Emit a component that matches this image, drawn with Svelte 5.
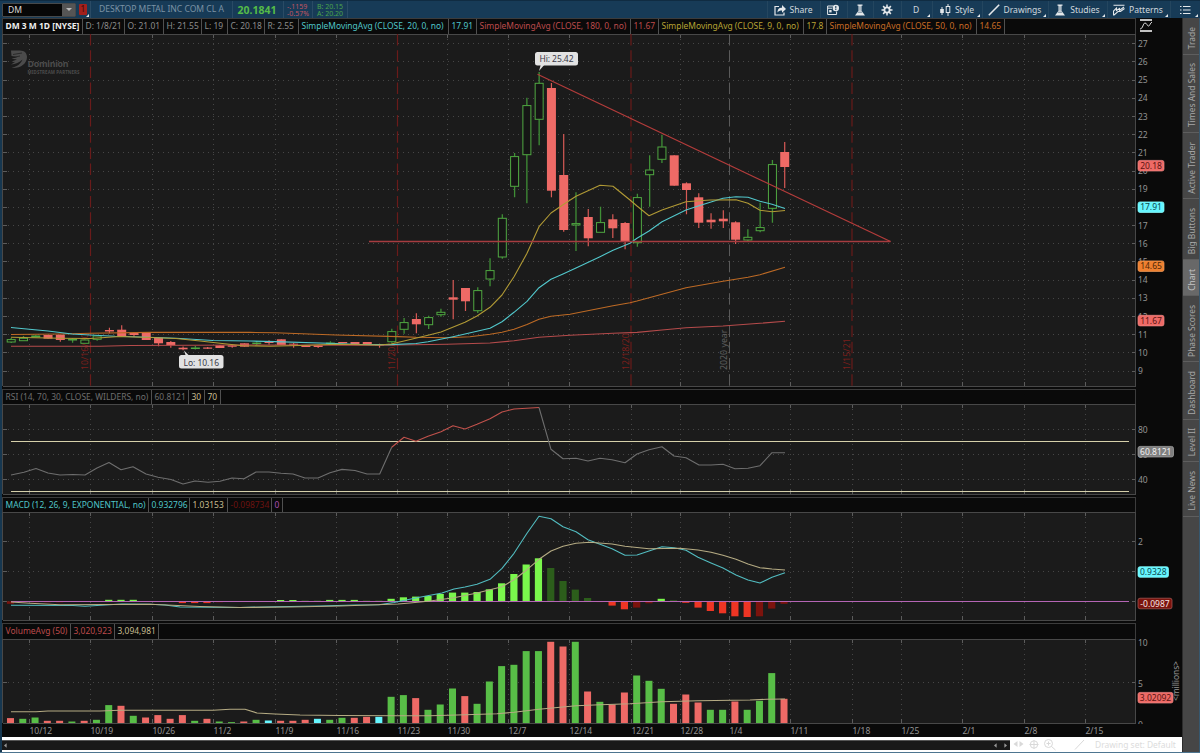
<script>
  const buttons = [
    { icon: 'share', label: 'Share', w: 53 },
    { icon: 'calendar', w: 27 },
    { icon: 'flask', w: 26 },
    { icon: 'gear', w: 28 },
    { label: 'D', w: 31, menu: true },
    { icon: 'candles', label: 'Style', w: 50, menu: true },
    { icon: 'line', label: 'Drawings', w: 66, menu: true },
    { icon: 'flask', label: 'Studies', w: 59, menu: true },
    { icon: 'patterns', label: 'Patterns', w: 63, menu: true },
    { icon: 'list', w: 30, menu: true }
  ];

  const tabs = [
    { name: 'Trade', h: 37 },
    { name: 'Times And Sales', h: 78 },
    { name: 'Active Trader', h: 66 },
    { name: 'Big Buttons', h: 61 },
    { name: 'Chart', h: 36, active: true },
    { name: 'Phase Scores', h: 66 },
    { name: 'Dashboard', h: 58 },
    { name: 'Level II', h: 42 },
    { name: 'Live News', h: 55 }
  ];

  const priceCells = [
    { t: 'DM 3 M 1D [NYSE]', w: 80, c: 'title' },
    { t: 'D: 1/8/21', w: 42 },
    { t: 'O: 21.01', w: 39 },
    { t: 'H: 21.55', w: 38 },
    { t: 'L: 19', w: 26 },
    { t: 'C: 20.18', w: 37 },
    { t: 'R: 2.55', w: 34 },
    { t: 'SimpleMovingAvg (CLOSE, 20, 0, no)', w: 150, c: 'cyan' },
    { t: '17.91', w: 28, c: 'cyan' },
    { t: 'SimpleMovingAvg (CLOSE, 180, 0, no)', w: 154, c: 'red' },
    { t: '11.67', w: 28, c: 'red' },
    { t: 'SimpleMovingAvg (CLOSE, 9, 0, no)', w: 145, c: 'yellow' },
    { t: '17.8', w: 23, c: 'yellow' },
    { t: 'SimpleMovingAvg (CLOSE, 50, 0, no)', w: 150, c: 'orange' },
    { t: '14.65', w: 28, c: 'orange' }
  ];
  const rsiCells = [
    { t: 'RSI (14, 70, 30, CLOSE, WILDERS, no)', w: 149, c: 'dim' },
    { t: '60.8121', w: 37, c: 'dim' },
    { t: '30', w: 16, c: 'khaki' },
    { t: '70', w: 16, c: 'khaki' }
  ];
  const macdCells = [
    { t: 'MACD (12, 26, 9, EXPONENTIAL, no)', w: 146, c: 'cyan' },
    { t: '0.932796', w: 41, c: 'cyan' },
    { t: '1.03153', w: 38, c: 'khaki' },
    { t: '-0.098734', w: 44, c: 'darkred' },
    { t: '0', w: 11, c: 'magenta' }
  ];
  const volumeCells = [
    { t: 'VolumeAvg (50)', w: 68, c: 'red' },
    { t: '3,020,923', w: 44, c: 'red' },
    { t: '3,094,981', w: 44, c: 'khaki' }
  ];

  const dates = [
    ['10/12', 29.5], ['10/19', 90.5], ['10/26', 152.5], ['11/2', 213.5], ['11/9', 275.5],
    ['11/16', 336.5], ['11/23', 397.5], ['11/30', 447.5], ['12/7', 508.5], ['12/14', 569.5],
    ['12/21', 631.5], ['12/28', 680.5], ['1/4', 729.5], ['1/11', 790.5], ['1/18', 852.5],
    ['1/25', 901.5], ['2/1', 962.5], ['2/8', 1024.5], ['2/15', 1085.5]
  ];
  const expirations = [
    { x: 90.5, t: '10/16/20' },
    { x: 397.5, t: '11/20/20' },
    { x: 631, t: '12/18/20' },
    { x: 852, t: '1/15/21' }
  ];
  const marked = [90.5, 397.5, 631.5, 729.5, 852.5];

  const x = (i) => 11.2 + i * 12.278;
  const py = (p) => 43.3 + (27 - p) * 18.18;
  const prices = Array.from({ length: 19 }, (_, i) => 27 - i);

  // up, body top, body bottom, high, low
  const candles = [
    [1, 339.3, 342, 338, 343], [1, 338, 340.7, 336, 340.7], [1, 335.7, 337, 335, 337],
    [0, 335, 338.7, 335, 338.7], [0, 334.7, 340, 334.7, 341.7], [1, 339, 340, 338, 342.7],
    [1, 339.7, 343.3, 339, 343.3], [1, 335.7, 339.3, 335, 340.7], [0, 330, 331.5, 327.7, 333.3],
    [0, 329.7, 336.7, 325.3, 336.7], [0, 333, 335, 333, 337], [0, 333, 340, 333, 340],
    [0, 337.7, 343.3, 337.7, 346.3], [0, 342, 345.3, 341, 347.7], [0, 347.7, 349.3, 346.5, 350.3],
    [1, 347.7, 348.4, 346, 349.5], [0, 347.5, 348.7, 347, 349], [0, 345.3, 348, 345, 348],
    [0, 345.3, 346.7, 345, 347.7], [0, 343.3, 346.7, 343.3, 346.7], [1, 342.8, 343.5, 341, 345],
    [0, 341.7, 343, 340.3, 344.7], [0, 339.3, 345, 339.3, 345], [0, 343.7, 344.7, 343, 347.7],
    [0, 345.3, 347, 345, 347], [0, 345.3, 347, 345, 348], [1, 342.8, 343.5, 341.3, 344],
    [0, 342, 343.3, 342, 343.3], [0, 342, 344, 342, 344], [0, 342, 344.3, 342, 345],
    [0, 344.5, 345.4, 343.7, 347.7], [1, 331.3, 341.7, 328.7, 342.7], [1, 322.3, 329.3, 318, 333.7],
    [0, 319, 324.3, 313.3, 333.3], [1, 317.3, 324.7, 315.7, 329], [1, 312, 314.7, 308.7, 316.7],
    [0, 297.3, 299.7, 280, 319.3], [0, 288, 301.3, 288, 311], [1, 290.3, 310.7, 287.3, 313],
    [1, 270.3, 279, 258.3, 286.3], [1, 218, 257, 214.3, 258.7], [1, 156.3, 186.3, 153, 197.3],
    [1, 105.3, 154.7, 97.7, 203.3], [1, 83, 119.3, 72, 145.3], [0, 88, 190.7, 83, 197.3],
    [0, 175, 230, 134, 231.7], [1, 223.3, 225, 192.3, 251], [0, 217, 238.3, 209, 246.3],
    [1, 222.3, 232.3, 206.7, 232.3], [0, 219.3, 228.3, 214.3, 238], [0, 223, 241.3, 222, 249.3],
    [1, 197.3, 242.7, 193.7, 246.7], [1, 169.7, 174.7, 155.3, 206.7], [1, 146.7, 159.3, 134.7, 163],
    [0, 155.3, 185.7, 155.3, 185.7], [0, 183.3, 190, 182.3, 214.3], [0, 197.3, 222.7, 193.3, 228],
    [0, 219.7, 222.3, 213.3, 228.7], [0, 218.7, 221.3, 210.3, 228], [0, 222.3, 239.7, 221.3, 244],
    [1, 237, 240, 229.3, 241], [1, 227.3, 230.7, 202.7, 232.3], [1, 164.3, 208.3, 160, 222.7],
    [0, 152, 167, 142, 188]
  ];

  const sma20 = '11,327.5 24,328.8 48,331 72,334 90,335 115,336.3 140,337 176,338.3 213,340.5 250,341 275,341.6 336,343.5 360,344.5 391,344.6 416,343.5 428,341.8 453,336.7 490,328.3 502,321.7 514,312.3 527,301.3 539,287.7 551,279.3 563,274 576,268 600,256.7 613,250.3 630,243.3 637,238.3 649,231 662,221.7 686,210 699,205.7 723,198.3 736,196.7 748,197.3 760,201.3 772,204.3 785,208.5';
  const sma9 = '11,337.3 60,338.3 90,338.5 120,336.5 150,337.5 176,338.5 200,341 220,343.3 243,345.7 270,346.2 300,345.5 336,344.3 379,345 391,344 404,341 428,335.3 441,332 465,322.3 477,316 490,307.3 502,295 514,276.7 527,253.3 539,226.7 551,213 563,204.7 576,196.3 600,185.3 613,186.3 630,200 637,206 649,215.7 662,210 686,201.7 710,200 736,199.7 748,203.3 760,210.3 772,211.7 785,210.5';
  const sma50 = '11,334.5 60,334 90,333.3 150,332.4 250,332.4 275,332.8 336,335 398,336.6 416,337.3 447,337.7 470,336.7 490,334.3 502,332.3 514,329.3 527,324.5 539,319.3 551,316.3 570,314.2 613,305.7 630,302.7 637,301 662,294.3 686,287.7 723,281.3 748,277.3 760,274.7 785,267.3';
  const sma180 = '11,346.3 100,346.3 130,345.5 250,345 380,345.2 447,344.3 490,343 514,340.7 539,337.3 570,335.3 613,333.3 637,332.4 662,330 686,327.7 723,326 760,323.3 785,321.3';

  const rsiA = '11,475 24,472.3 36,468.5 48,473 60,475 73,474.5 85,475 97,468 109,462.5 121,469.7 133,466.7 146,474 158,477.3 171,479.5 183,484 195,481 208,482.3 220,481.3 232,478 244,478.7 256,472 269,472 281,473.3 293,474 305,478 318,478 330,472.7 342,469.4 355,470.5 367,474 379.7,474 391.7,447.3';
  const rsiHot = '391.7,447.3 404,437.3 416,441.2 428,436.3 441,431.7 453,425.7 465,429 477,424.3 490,418.7 502,412 514,409 539,407.5';
  const rsiB = '539,407.5 551,449.3 563,458.7 576,458.3 588,461 600,458.3 612,459.7 625,462.7 637,454 649,449.7 662,446.7 674,456 686,457.7 699,465 711,465 723,464.3 735,468.7 748,468.2 760,465.7 772,452.7 785,452.7';

  const macd = '11,605.3 73,605.5 85,606.3 97,605.5 122,604 150,604.3 165,605 180,607 240,607.5 275,606.7 320,606 355,605 379,604.7 394,602.5 417,597.7 442,593 454,589 465,587 477,584.3 490,579.3 502,568.3 514,553.3 527,533.3 539,516.3 551,518.7 563,526.7 576,531.7 588,539.7 612,548.7 625,555.3 637,555 649,551 662,546.7 674,547.7 686,550.3 698,557.3 711,563 723,568 736,575 748,580 760,583 772,577.3 785,572.7';
  const signal = '11,602 30,603.3 60,604.7 150,604.3 200,606.5 240,607.5 290,607 340,606 398,604 410,603 430,601 454,597.7 477,593 502,586.7 514,579.7 527,569.7 539,559.3 551,551 563,546.3 576,543.3 590,542.3 612,544 625,546.3 649,548.7 680,548.3 698,550 711,552.3 723,555.3 736,559.3 748,564 760,567.7 772,569 785,570';

  // histogram bars: height above zero, growing or fading
  const hist = [
    [-2.5, 0], [-1, 0], [-1, 0], [-1, 0], [-1, 0], [-0.6, 0], [-0.6, 0], [0.3, 0],
    [1.5, 1], [1.5, 1], [1.5, 1], [0, 0], [0, 0], [-0.6, 1], [-1.8, 1], [-1.8, 1],
    [-1.8, 1], [-1, 0], [-0.6, 0], [-0.6, 0], [0, 0], [0, 0], [1.3, 1], [1.3, 1],
    [0.8, 0], [0.8, 0], [1.4, 1], [1.4, 1], [1.4, 1], [0.8, 0], [0.8, 0], [2.5, 1],
    [4, 1], [4.7, 1], [5.3, 1], [7.3, 1], [8.7, 1], [8.7, 1], [9.3, 1], [12, 1],
    [18, 1], [27.3, 1], [36.8, 1], [43, 1], [33.3, 0], [20.3, 0], [11.7, 0], [3.3, 0],
    [-0.8, 0], [-4.3, 1], [-8, 1], [-6.3, 0], [-2, 0], [2.5, 1], [1, 0], [-1.5, 1],
    [-6.3, 1], [-9.7, 1], [-12, 1], [-15, 1], [-15.7, 1], [-15, 0], [-7.3, 0], [-2.5, 0]
  ];
  const histColor = ([h, strong]) =>
    h > 0 ? (strong ? '#7af74c' : '#2c5e1b') : strong ? '#ee3524' : '#7c130d';

  // volume bars: colour key, bar top
  const volume = [
    ['r', 718.3], ['g', 719], ['g', 717.7], ['r', 721], ['r', 721], ['g', 721.7], ['r', 721], ['g', 720],
    ['g', 705.3], ['r', 706], ['g', 716], ['r', 717.7], ['r', 715.3], ['r', 719], ['r', 715.3], ['g', 721],
    ['r', 719], ['g', 721.7], ['g', 722.3], ['r', 721.7], ['g', 720], ['c', 720.7], ['r', 721], ['r', 721],
    ['r', 720], ['c', 719], ['g', 720], ['g', 718], ['r', 718], ['r', 717], ['c', 717], ['g', 697],
    ['g', 695.3], ['r', 698.3], ['g', 710], ['g', 704.7], ['g', 688.7], ['r', 696.3], ['g', 704], ['g', 681.7],
    ['g', 666.3], ['g', 665], ['g', 651.3], ['g', 651.3], ['r', 642], ['r', 646.7], ['g', 642], ['r', 691.7],
    ['g', 702], ['r', 704.7], ['r', 692.7], ['g', 675.7], ['g', 681], ['g', 689], ['r', 704], ['r', 694.7],
    ['r', 702.7], ['g', 710], ['g', 710], ['r', 701.7], ['g', 710], ['g', 701], ['g', 673.3], ['r', 699]
  ];
  const volColor = { r: '#ee6a66', g: '#58be47', c: '#66f6ff' };
  const volAvg = '11,711.7 36,711.7 48,711 100,711 120,710.2 213,710.2 230,709.2 245,709.3 257,713 275,714 300,715 340,715.5 398,715.7 430,715.7 457,715 497,713.7 514,712.3 539,709.3 576,705.7 600,704.8 630,703.7 662,701.7 698,700.7 750,700 767,699.3 785,699';
</script>

{#snippet icon(name)}
  <svg class="icon" viewBox="0 0 12 12">
    {#if name === 'share'}
      <path d="M5 2.5H1v8.500h9V8.500" fill="none" stroke="#e4e8eb" stroke-width="1.2" />
      <path d="M3.500 8.500C3.600 5 5 3.800 8 3.800V1l4 4-4 3.700V6.400C6 6.400 4.600 6.800 3.500 8.500z" />
    {:else if name === 'calendar'}
      <path d="M6 2H.6v8.500h9V7.500M.6 4.200H5" fill="none" stroke="#e4e8eb" stroke-width="1" />
      <rect x="2.200" y="6" width="2.400" height="2.400" />
      <circle cx="8.800" cy="4" r="3.200" />
      <path d="M8.800 2v2.500M8.800 5v1" stroke="#173b57" stroke-width="1.100" />
    {:else if name === 'flask'}
      <path d="M3.500.5h5v1.200h-5zM4.500 1.700h3v5l3.500 4.800H1l3.500-4.800z" />
      <path d="M6 2.200v4.500M3.800 8.200h4.400" stroke="#506c82" stroke-width=".8" />
    {:else if name === 'gear'}
      <path d="M6 .5v11M.5 6h11M2.100 2.100l7.800 7.800M9.900 2.100L2.100 9.900" stroke="#e4e8eb" stroke-width="1.500" />
      <circle cx="6" cy="6" r="3.500" />
      <circle cx="6" cy="6" r="1.700" fill="#173b57" />
    {:else if name === 'candles'}
      <path d="M3 3v8M9 0v12" stroke="#e4e8eb" stroke-width="1" />
      <rect x="1.200" y="5" width="3.600" height="4" />
      <rect x="7.200" y="2.500" width="3.600" height="6" fill="#173b57" stroke="#e4e8eb" stroke-width="1" />
    {:else if name === 'line'}
      <path d="M.8 11.200L11.200.8" stroke="#e4e8eb" stroke-width="1.600" />
    {:else if name === 'patterns'}
      <path d="M.5 1.300h11M.5 11.500V7l3-3v2.500l3-2v2l4.500-3.500M1 11l4-3.500h2.500l4-3" fill="none" stroke="#e4e8eb" stroke-width="1.100" />
    {:else if name === 'list'}
      <path d="M1 2.500h1.500M4 2.500h7.500M1 6h1.500M4 6h7.500M1 9.500h1.500M4 9.500h7.500" stroke="#e4e8eb" stroke-width="1.100" />
    {/if}
  </svg>
{/snippet}

{#snippet header(cells)}
  <div class="cells">
    {#each cells as cell}
      <span class="cell {cell.c ?? ''}" style:width="{cell.w}px">{cell.t}</span>
    {/each}
  </div>
{/snippet}

{#snippet grid(top, bottom, rows)}
  <rect x="2" y={top} width="1134" height={bottom - top} fill="#1b1b1b" />
  <g shape-rendering="crispEdges">
    {#each rows as r}
      <line x1="3" x2="1130" y1={Math.round(r) + 0.5} y2={Math.round(r) + 0.5} class="dots" />
      <path d="M3 {Math.round(r) + 0.5}h4M1132 {Math.round(r) + 0.5}h4" class="tick" />
    {/each}
    {#each dates as [, gx]}
      {#if bottom - top < 200 || !marked.includes(gx)}
        <line x1={gx} x2={gx} y1={top} y2={bottom} class="dots" />
        <path d="M{gx} {top}v4M{gx} {bottom}v-4" class="tick" />
      {/if}
    {/each}
    <path d="M2.500 {bottom}V{top + 0.5}H1135.500V{bottom}H2.500" class="frame" />
  </g>
{/snippet}

{#snippet tag(tx, ty, w, text, bg, fg, edge)}
  <rect x={tx} y={ty - 5.300} width={w} height="10.600" rx="2" fill={bg} stroke={edge} stroke-width=".7" />
  <text x={tx + w / 2} y={ty + 3.100} text-anchor="middle" fill={fg}>{text}</text>
{/snippet}

<div class="app">
  <header class="toolbar">
    <div class="symbol"><span>DM</span><i></i></div>
    <div class="badge">1</div>
    <div class="company">DESKTOP METAL INC COM CL A</div>
    <div class="last">20.1841</div>
    <div class="pair down"><span>-.1159</span><span>-0.57%</span></div>
    <div class="pair up"><span>B: 20.15</span><span>A: 20.20</span></div>
    <div class="spacer"></div>
    {#each buttons as b}
      <button style:width="{b.w}px" class:menu={b.menu}>
        {#if b.icon}{@render icon(b.icon)}{/if}
        {#if b.label}<span>{b.label}</span>{/if}
      </button>
    {/each}
  </header>

  <div class="body">
    <main>
      <section class="price">
        <div class="head">
          {@render header(priceCells)}
          <svg class="fit" viewBox="0 0 12 13">
            <path d="M0 1h12M0 12h12" stroke="#fff" stroke-width="1.500" />
            <path d="M0 10C3 10 3 4 5 4s2 3 3.500 3S10 4 12 3" fill="none" stroke="#ddd" />
          </svg>
        </div>
        <svg class="plot" viewBox="2 34 1180 354" height="354">
          {@render grid(34, 386, prices.map(py))}
          {#each expirations as e}
            <line x1={e.x} x2={e.x} y1="34" y2="386" stroke="#6a1b1a" stroke-width="1.200" stroke-dasharray="11.500 4.700" />
            <text transform="translate({e.x - 2.500} 370) rotate(-90)" fill="#7c1f1c" class="mark">{e.t}</text>
          {/each}
          <line x1="729.500" x2="729.500" y1="34" y2="386" stroke="#5a5a5a" stroke-dasharray="11.500 4.700" />
          <text transform="translate(727 370) rotate(-90)" fill="#606060" class="mark">2020 year</text>

          <g class="logo">
            <path d="M11 50.500h9c4.500 0 7 2.800 7 6.500 0 6.500-6 11.500-15.500 11 6-1.500 9.500-4.500 11-8.500-3 3-7 4.500-11.500 5l4-2.500-3.500-.5 5.500-2-5.500-.8 6-1.700-6-1z" />
            <path d="M13 54.500l9-1.500M13 57.500l7-1.500" stroke="#1b1b1b" stroke-width=".7" />
            <text x="27.500" y="67.300" class="brand" textLength="41">Dominion</text>
            <text x="27.500" y="74" class="sub" textLength="52">MIDSTREAM PARTNERS</text>
          </g>

          {#each candles as [up, top, bottom, high, low], i}
            {#if up}
              <path d="M{x(i)} {high}V{top}M{x(i)} {bottom}V{low}" stroke="#3f8f36" stroke-width="1.300" />
              <rect x={x(i) - 4} y={top + 0.3} width="8" height={Math.max(bottom - top - 0.3, 0.5)} fill="#151515" stroke="#50a842" />
            {:else}
              <line x1={x(i)} x2={x(i)} y1={high} y2={low} stroke="#d85a56" stroke-width="1.200" />
              <rect x={x(i) - 4.500} y={top} width="9" height={bottom - top} fill="#ee6a66" />
            {/if}
          {/each}

          <polyline points={sma180} stroke="#b54b4b" />
          <polyline points={sma50} stroke="#bd6a25" />
          <polyline points={sma20} stroke="#52c8cc" />
          <polyline points={sma9} stroke="#b19a35" />
          <line x1="369" x2="890.500" y1="241.500" y2="241.500" stroke="#a63c40" stroke-width="1.400" />
          <line x1="537.500" x2="890.500" y1="74.300" y2="241.500" stroke="#b43c3b" stroke-width="1.200" />

          <path d="M541 64l-2 7 6-7z" fill="#e2e2e2" />
          <rect x="535" y="52" width="43" height="13.500" rx="2.500" fill="#e2e2e2" />
          <text x="539.500" y="62" fill="#3a3a48" textLength="34">Hi: 25.42</text>
          <path d="M184 350.500l2 6h4z" fill="#e2e2e2" />
          <rect x="179" y="355" width="44.500" height="13.500" rx="2.500" fill="#e2e2e2" />
          <text x="183.500" y="365.700" fill="#3a3a48" textLength="35.500">Lo: 10.16</text>

          {#each prices as p}
            {#if p !== 18}<text x="1138" y={py(p) + 3.600} class="axis">{p}</text>{/if}
          {/each}
          {@render tag(1138, 165.700, 26, '20.18', '#ee6a66', '#5a1412', '#f08a86')}
          {@render tag(1138, 207.200, 26, '17.91', '#66f6ff', '#0c4b50', '#8ff')}
          {@render tag(1138, 266.200, 26, '14.65', '#ee8030', '#4f2706', '#f09a58')}
          {@render tag(1138, 320.600, 26, '11.67', '#ee6a66', '#5a1412', '#f08a86')}
        </svg>
      </section>

      <section class="rsi">
        <div class="head">{@render header(rsiCells)}</div>
        <svg class="plot" viewBox="2 404 1180 93" height="93">
          {@render grid(404, 494, [429, 454, 479])}
          <path d="M11 441.500H1129M11 491.500H1129" stroke="#d6d0aa" />
          <polyline points={rsiA} stroke="#6e6e6e" />
          <polyline points={rsiHot} stroke="#c2524c" />
          <polyline points={rsiB} stroke="#6e6e6e" />
          <text x="1138" y="432.700" class="axis">80</text>
          <text x="1138" y="457.700" class="axis">60</text>
          <text x="1138" y="483.200" class="axis">40</text>
          {@render tag(1138, 451.700, 35.500, '60.8121', '#808080', '#f0f0f0', '#aaa')}
        </svg>
      </section>

      <section class="macd">
        <div class="head">{@render header(macdCells)}</div>
        <svg class="plot" viewBox="2 512 1180 111" height="111">
          {@render grid(512, 620, [541, 571, 601])}
          {#each hist as h, i}
            <rect x={x(i) - 4.300} y={h[0] > 0 ? 601.300 - h[0] : 601.300} width="7.200" height={Math.abs(h[0])} fill={histColor(h)} />
          {/each}
          <line x1="11" x2="1129" y1="601.500" y2="601.500" stroke="#b565b5" />
          <polyline points={macd} stroke="#52bcc0" />
          <polyline points={signal} stroke="#b5ab83" />
          <text x="1138" y="545" class="axis">2</text>
          {@render tag(1138, 572, 30.500, '0.9328', '#66f6ff', '#0c4b50', '#8ff')}
          {@render tag(1138, 603.500, 34, '-0.0987', '#7c130d', '#f5e6e4', '#b0605c')}
        </svg>
      </section>

      <section class="volume">
        <div class="head">{@render header(volumeCells)}</div>
        <svg class="plot" viewBox="2 639 1180 98" height="98">
          {@render grid(639, 723, [682])}
          {#each volume as [c, top], i}
            <rect x={x(i) - 4.200} y={top - 0.200} width="7" height={723.200 - top} fill={volColor[c]} />
          {/each}
          <polyline points={volAvg} stroke="#b5ab83" />
          {#each dates as [d, dx]}
            <text x={dx} y="734" class="axis">{d}</text>
          {/each}
          <text x="1138" y="645.500" class="axis">10</text>
          <text x="1138" y="686.500" class="axis">5</text>
          <clipPath id="zero"><rect x="1136" y="719" width="12" height="5" /></clipPath>
          <text x="1138" y="727.500" class="axis" clip-path="url(#zero)">0</text>
          {@render tag(1138, 697.700, 35, '3.02092', '#ee6a66', '#5a1412', '#f08a86')}
          <text transform="translate(1179 701) rotate(-90)" class="axis" textLength="40">&lt;millions&gt;</text>
        </svg>
      </section>

      <footer>
        <div class="scroll">
          <svg viewBox="0 0 4 6"><path d="M3.500 0v6L0 3z" /></svg>
          <span></span>
          <svg viewBox="0 0 4 6"><path d="M3.500 0v6L0 3z" /></svg>
          <svg viewBox="0 0 4 6"><path d="M.5 0v6L4 3z" /></svg>
        </div>
        <svg class="tools" viewBox="1010 737 85 15">
          <g fill="none" stroke="#d9d9d9">
            <path d="M1017.500 741v6l-4-3zM1019.500 741v6l4-3z" fill="#d9d9d9" stroke="none" />
            <circle cx="1034" cy="744.500" r="3.700" />
            <path d="M1029.500 744.500h9M1034 740v9" />
            <circle cx="1048.500" cy="743.500" r="4" />
            <path d="M1051.500 746.500l4 3.500M1046.500 743.500h4M1048.500 741.500v4M1075 749.500l9-9.500" />
          </g>
        </svg>
        <span class="set">Drawing set: Default</span>
      </footer>
    </main>

    <nav>
      {#each tabs as t}
        <div class="tab" class:active={t.active} style:height="{t.h}px"><span>{t.name}</span></div>
      {/each}
    </nav>
  </div>
</div>

<style>
  :global(body) {
    background: #0a0a0a;
    overflow: hidden;
  }

  .app {
    width: 1200px;
    height: 753px;
    display: flex;
    flex-direction: column;
    box-sizing: border-box;
    font-family: 'Noto Sans', sans-serif;
    font-size: 8.45px;
    color: #8c8c8c;
    background: #0a0a0a;
    border-bottom: 1px solid #4d7590;
  }

  .toolbar {
    height: 18px;
    flex: none;
    display: flex;
    align-items: center;
    background: #173b57;
    border-top: 1px solid #102c42;
    box-sizing: border-box;
    font-size: 8.55px;
  }

  .symbol {
    width: 74px;
    height: 14px;
    margin-left: 2px;
    box-sizing: border-box;
    background: #070707;
    border: 1px solid #46494b;
    display: flex;
    align-items: center;
    justify-content: space-between;
    padding-left: 5px;
    color: #d8d8d8;
    border-radius: 1px;
  }

  .symbol i {
    width: 13px;
    height: 12px;
    background: #555;
    display: flex;
    align-items: center;
    justify-content: center;
  }

  .symbol i::after {
    content: '';
    border: 3px solid transparent;
    border-top: 3px solid #bbb;
    border-bottom: 0;
  }

  .badge {
    position: relative;
    width: 8px;
    height: 11px;
    margin-left: 3px;
    line-height: 11px;
    text-align: center;
    color: #3d0908;
    background: #a3201c;
    border-radius: 1px;
  }

  .badge::after {
    content: '';
    position: absolute;
    right: -2px;
    bottom: -2px;
    border-left: 3px solid transparent;
    border-bottom: 3px solid #e4e8eb;
  }

  .company {
    margin-left: 3px;
    width: 143px;
    height: 17px;
    line-height: 17px;
    box-sizing: border-box;
    padding-left: 8px;
    color: #7b92a4;
    border-left: 1px solid #2a4b65;
    border-right: 1px solid #2a4b65;
    white-space: nowrap;
  }

  .last {
    width: 51px;
    height: 17px;
    line-height: 18px;
    box-sizing: border-box;
    padding-left: 4.5px;
    color: #55bb48;
    font-weight: 700;
    font-size: 10.5px;
    border-right: 1px solid #2a4b65;
  }

  .pair {
    height: 17px;
    padding: 0 4px;
    display: flex;
    flex-direction: column;
    justify-content: center;
    font-size: 7px;
    line-height: 7px;
    border-right: 1px solid #2a4b65;
  }

  .down {
    color: #c05562;
    padding: 0 3px;
  }

  .up {
    color: #4aa34c;
  }

  .spacer {
    flex: 1;
  }

  button {
    position: relative;
    height: 17px;
    padding: 0 2px 0 0;
    box-sizing: border-box;
    display: flex;
    align-items: center;
    justify-content: center;
    gap: 4px;
    background: none;
    border: 0;
    border-left: 1px solid #24465f;
    color: #d0d8de;
    font: inherit;
  }

  button.menu::after {
    content: '';
    position: absolute;
    right: 2px;
    bottom: 1px;
    border-left: 3px solid transparent;
    border-bottom: 3px solid #e4e8eb;
  }

  .icon {
    width: 12px;
    height: 12px;
    fill: #e4e8eb;
    flex: none;
  }

  .body {
    flex: 1;
    display: flex;
    border-left: 2px solid #163750;
    min-height: 0;
  }

  main {
    width: 1180px;
    display: flex;
    flex-direction: column;
    background: #0a0a0a;
  }

  section {
    display: flex;
    flex-direction: column;
  }

  .head {
    height: 16px;
    display: flex;
  }

  .rsi .head,
  .macd .head {
    height: 15px;
  }

  .rsi,
  .macd {
    margin-top: 1px;
  }

  .rsi .plot {
    margin-bottom: -1px;
  }

  .cells {
    display: flex;
    width: 1134px;
    box-sizing: border-box;
    border: 1px solid #3c3c3c;
    border-bottom: 0;
  }

  .cell {
    box-sizing: border-box;
    padding-left: 2.5px;
    line-height: 13px;
    white-space: nowrap;
    border-right: 1px solid #505050;
  }

  .title {
    color: #eee;
    font-weight: 700;
  }

  .cyan {
    color: #50c5c8;
  }

  .red {
    color: #bd4b4c;
  }

  .yellow {
    color: #b7a334;
  }

  .orange {
    color: #c96c25;
  }

  .khaki {
    color: #c6bc90;
  }

  .dim {
    color: #6e6e6e;
  }

  .darkred {
    color: #6c1310;
  }

  .magenta {
    color: #a94fb3;
  }

  .fit {
    width: 12px;
    height: 13px;
    margin: 1px 0 0 4px;
  }

  .plot {
    width: 1180px;
    display: block;
    font-size: 8.5px;
    flex: none;
  }

  .dots {
    stroke: #464646;
    stroke-dasharray: 1 4;
  }

  .tick {
    stroke: #5c5c5c;
    fill: none;
  }

  .frame {
    stroke: #484848;
    fill: none;
  }

  polyline {
    fill: none;
    stroke-width: 1.1;
    stroke-linejoin: round;
  }

  .axis {
    fill: #939393;
  }

  .mark {
    font-size: 8.8px;
  }

  .logo {
    fill: #4b4b4b;
  }

  .brand {
    font-size: 8.8px;
    font-weight: 700;
  }

  .sub {
    font-size: 4.4px;
    font-weight: 700;
  }

  footer {
    height: 15px;
    display: flex;
    align-items: center;
    background: #fff;
    color: #dcdcdc;
  }

  .scroll {
    width: 1008px;
    height: 10px;
    box-sizing: border-box;
    padding: 0 3px 0 2px;
    display: flex;
    align-items: center;
    gap: 7px;
    background: #191919;
    border-top: 1px solid #555;
  }

  .scroll span {
    flex: 1;
  }

  .scroll svg {
    width: 3px;
    height: 5px;
    fill: #999;
  }

  .tools {
    width: 85px;
    height: 15px;
  }

  .set {
    white-space: nowrap;
  }

  nav {
    width: 16px;
    background: #464646;
    border-left: 1px solid #2c2c2c;
    border-right: 1px solid #36586f;
    flex: none;
  }

  .tab {
    box-sizing: border-box;
    padding-top: 4px;
    display: flex;
    align-items: center;
    justify-content: center;
    border-bottom: 1px solid #5e5e5e;
    color: #a6a6a6;
  }

  .tab span {
    writing-mode: vertical-rl;
    transform: rotate(180deg);
    white-space: nowrap;
  }

  .active {
    background: #686868;
    color: #c4c4c4;
  }
</style>
